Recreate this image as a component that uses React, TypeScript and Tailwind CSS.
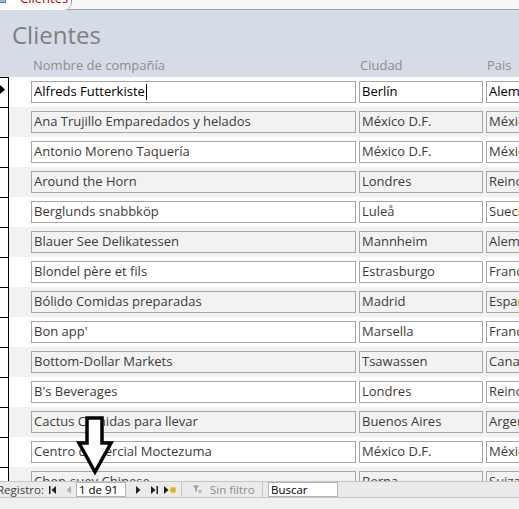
import React from "react";

const rows: [string, string, string][] = [
  ["Alfreds Futterkiste", "Berlín", "Alemania"],
  ["Ana Trujillo Emparedados y helados", "México D.F.", "México"],
  ["Antonio Moreno Taquería", "México D.F.", "México"],
  ["Around the Horn", "Londres", "Reino Unido"],
  ["Berglunds snabbköp", "Luleå", "Suecia"],
  ["Blauer See Delikatessen", "Mannheim", "Alemania"],
  ["Blondel père et fils", "Estrasburgo", "Francia"],
  ["Bólido Comidas preparadas", "Madrid", "España"],
  ["Bon app'", "Marsella", "Francia"],
  ["Bottom-Dollar Markets", "Tsawassen", "Canadá"],
  ["B's Beverages", "Londres", "Reino Unido"],
  ["Cactus Comidas para llevar", "Buenos Aires", "Argentina"],
  ["Centro comercial Moctezuma", "México D.F.", "México"],
  ["Chop-suey Chinese", "Berna", "Suiza"],
];

function Row({ r, i }: { r: [string, string, string]; i: number }) {
  const alt = i % 2 === 1;
  const box = alt ? "bg-[#f2f2f2]" : "bg-white";
  const txt = i === 0 ? "text-black" : "text-[#3f3a36]";
  return (
    <div className={`flex h-[30px] shrink-0 ${alt ? "bg-[#f2f2f2]" : "bg-white"}`}>
      <div className="relative w-[9px] shrink-0 bg-white border-r border-t border-black">
        {i === 0 && (
          <svg className="absolute left-0 top-[7px]" width="5" height="9" viewBox="0 0 5 9">
            <path d="M0 0 L5 4.5 L0 9 Z" fill="#000" />
          </svg>
        )}
      </div>
      <div className="flex items-start pt-[4px] pl-[22px] gap-[3px]">
        <div className={`w-[325px] h-[22px] border border-[#a6a6a6] ${box} flex items-center pl-[2px] text-[13px] ${txt} whitespace-nowrap overflow-hidden`}>
          {r[0]}
          {i === 0 && <span className="inline-block w-px h-[16px] bg-black ml-[1px]" />}
        </div>
        <div className={`w-[124px] h-[22px] border border-[#a6a6a6] ${box} flex items-center pl-[2px] text-[13px] ${txt} whitespace-nowrap overflow-hidden`}>
          {r[1]}
        </div>
        <div className={`w-[110px] h-[22px] border border-[#a6a6a6] ${box} flex items-center pl-[2px] text-[13px] ${txt} whitespace-nowrap overflow-hidden`}>
          {r[2]}
        </div>
      </div>
    </div>
  );
}

export default function App() {
  return (
    <div
      className="relative w-[519px] h-[509px] overflow-hidden flex flex-col bg-[#f0f0f0]"
      style={{ fontFamily: '"Open Sans", "Noto Sans", sans-serif' }}
    >
      {/* tab strip */}
      <div className="h-[10px] shrink-0 bg-[#f7f7f7] border-b border-[#a0a0a0] relative">
        <div className="absolute left-0 top-0 h-[10px] w-[72px] bg-white border-r border-[#a0a0a0] rounded-br-[8px] overflow-hidden">
          <div className="absolute left-[-2px] top-[-4px] w-[8px] h-[7px] bg-[#9fb4d3] border border-[#5a78a0]" />
          <span className="absolute left-[20px] top-[-11px] text-[13px] leading-[18px] text-[#c00000]">Clientes</span>
        </div>
      </div>
      {/* header */}
      <div className="h-[67px] shrink-0 bg-[#d6dce5] relative">
        <div className="absolute left-[12px] top-[8px] text-[24px] leading-[34px] text-[#7f7f7f]">Clientes</div>
        <div className="absolute left-[33px] top-[46px] text-[13px] text-[#8c8c8c]">Nombre de compañía</div>
        <div className="absolute left-[360px] top-[46px] text-[13px] text-[#8c8c8c]">Ciudad</div>
        <div className="absolute left-[487px] top-[46px] text-[13px] text-[#8c8c8c]">Pais</div>
      </div>
      {/* body */}
      <div className="flex-1 overflow-hidden flex flex-col bg-white">
        {rows.map((r, i) => (
          <Row key={i} r={r} i={i} />
        ))}
      </div>
      {/* nav bar */}
      <div className="h-[17px] shrink-0 bg-[#ebebeb] border-t border-b border-[#c4c4c4] flex items-center text-[11.5px] text-[#3f3f3f] whitespace-nowrap">
        <div className="ml-[-3px] w-[52px] shrink-0">Registro:</div>
        <svg className="shrink-0" width="7" height="8" viewBox="0 0 7 8">
          <rect x="0" y="0" width="1.5" height="8" fill="#222" />
          <path d="M7 0 L2.5 4 L7 8 Z" fill="#222" />
        </svg>
        <svg className="ml-[10px] shrink-0" width="5" height="8" viewBox="0 0 5 8">
          <path d="M5 0 L0.5 4 L5 8 Z" fill="#b0b0b0" />
        </svg>
        <div className="ml-[5px] w-[50px] h-[15px] shrink-0 bg-white border border-[#b5b5b5] flex items-center pl-[2px] text-black">1 de 91</div>
        <svg className="ml-[10px] shrink-0" width="5" height="8" viewBox="0 0 5 8">
          <path d="M0 0 L4.5 4 L0 8 Z" fill="#222" />
        </svg>
        <svg className="ml-[10px] shrink-0" width="7" height="8" viewBox="0 0 7 8">
          <path d="M0 0 L4.5 4 L0 8 Z" fill="#222" />
          <rect x="5.5" y="0" width="1.5" height="8" fill="#222" />
        </svg>
        <svg className="ml-[6px] shrink-0" width="13" height="8" viewBox="0 0 13 8">
          <path d="M0 0 L4.5 4 L0 8 Z" fill="#222" />
          <rect x="6" y="1" width="6" height="6" fill="#f3d34a" />
          <path d="M6 4 H12 M9 1 V7 M7 2 L11 6 M11 2 L7 6" stroke="#c9a21a" strokeWidth="0.8" />
        </svg>
        <div className="ml-[4px] w-px h-[16px] shrink-0 bg-[#c4c4c4]" />
        <svg className="ml-[11px] shrink-0" width="9" height="9" viewBox="0 0 9 9">
          <path d="M0 0.5 H6 L3.8 3.5 V7 L2.2 6 V3.5 Z" fill="#9a9a9a" />
          <path d="M5.5 5 L8.5 8 M8.5 5 L5.5 8" stroke="#9a9a9a" strokeWidth="1" />
        </svg>
        <div className="ml-[8px] w-[46px] shrink-0 text-[#8c8c8c]">Sin filtro</div>
        <div className="ml-[6px] w-px h-[16px] shrink-0 bg-[#c4c4c4]" />
        <div className="ml-[5px] w-[70px] h-[15px] shrink-0 bg-white border border-[#b5b5b5] flex items-center pl-[2px] text-black">Buscar</div>
      </div>
      <div className="h-[11px] shrink-0 bg-[#f0f0f0]" />
      {/* overlay arrow */}
      <svg className="absolute left-0 top-0 pointer-events-none" width="519" height="509" viewBox="0 0 519 509">
        <path
          d="M87 418 H102 V443 H111 L95 472 L79 443 H87 Z"
          fill="white"
          stroke="black"
          strokeWidth="3.5"
          strokeLinejoin="miter"
        />
      </svg>
    </div>
  );
}
